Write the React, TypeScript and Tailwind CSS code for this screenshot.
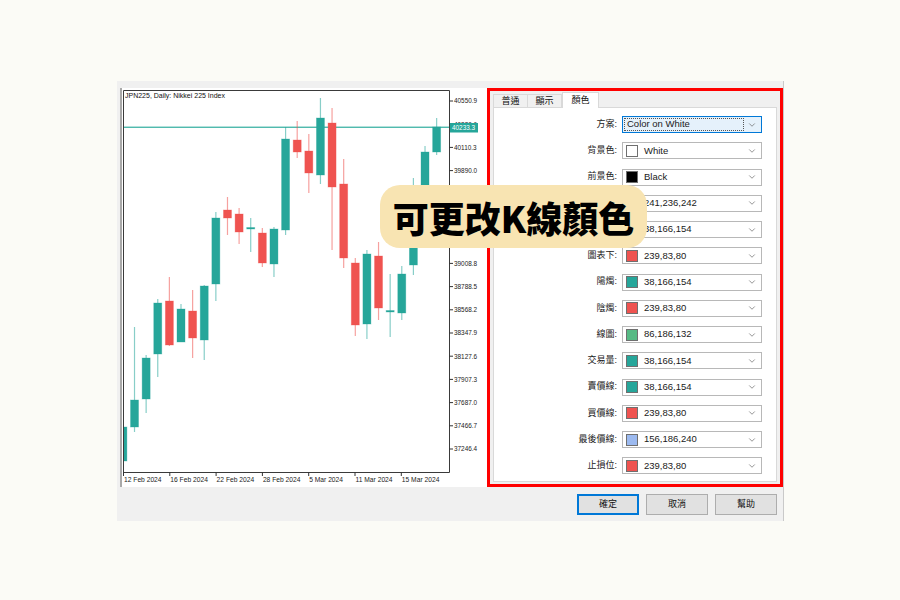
import React from "react";
import { ChevronDown } from "lucide-react";

type Candle = {
  up: boolean;
  wt: number;
  bt: number;
  bb: number;
  wb: number;
};

type ColorRow = {
  label: string;
  value: string;
  swatch?: string;
};

const GREEN = "#26a69a";
const RED = "#ef5350";

// candle pixel positions, read straight off the chart
const candles: Array<Candle> = [
  { up: true, wt: 424, bt: 427, bb: 461, wb: 462 },
  { up: true, wt: 327, bt: 400, bb: 427, wb: 432 },
  { up: true, wt: 355, bt: 358, bb: 399, wb: 413 },
  { up: true, wt: 299, bt: 303, bb: 354, wb: 377 },
  { up: false, wt: 277, bt: 301, bb: 345, wb: 346 },
  { up: true, wt: 304, bt: 309, bb: 342, wb: 342 },
  { up: false, wt: 290, bt: 311, bb: 338, wb: 358 },
  { up: true, wt: 285, bt: 286, bb: 340, wb: 360 },
  { up: true, wt: 212, bt: 218, bb: 284, wb: 301 },
  { up: false, wt: 197, bt: 210, bb: 218, wb: 235 },
  { up: false, wt: 208, bt: 214, bb: 232, wb: 244 },
  { up: true, wt: 218, bt: 227.5, bb: 229, wb: 252 },
  { up: false, wt: 228, bt: 233, bb: 263, wb: 267 },
  { up: true, wt: 227, bt: 229, bb: 264, wb: 277 },
  { up: true, wt: 127, bt: 139, bb: 230, wb: 235 },
  { up: false, wt: 121, bt: 140, bb: 152, wb: 158 },
  { up: false, wt: 134, bt: 151, bb: 173, wb: 193 },
  { up: true, wt: 98, bt: 118, bb: 175, wb: 184 },
  { up: false, wt: 108, bt: 123, bb: 187, wb: 250 },
  { up: false, wt: 159, bt: 184, bb: 258, wb: 268 },
  { up: false, wt: 258, bt: 263, bb: 325, wb: 336 },
  { up: true, wt: 250, bt: 254, bb: 324, wb: 339 },
  { up: false, wt: 242, bt: 256, bb: 308, wb: 320 },
  { up: true, wt: 274, bt: 310.5, bb: 312, wb: 337 },
  { up: true, wt: 266, bt: 274, bb: 313, wb: 320 },
  { up: true, wt: 178, bt: 200, bb: 265, wb: 275 },
  { up: true, wt: 146, bt: 152, bb: 215, wb: 225 },
  { up: true, wt: 118, bt: 127, bb: 152, wb: 155 },
];

const prices = [
  "40550.9", "40330.6", "40110.3", "39890.0", "39669.7", "39449.4", "39229.1", "39008.8",
  "38788.5", "38568.2", "38347.9", "38127.6", "37907.3", "37687.0", "37466.7", "37246.4",
];

const dates = ["12 Feb 2024", "16 Feb 2024", "22 Feb 2024", "28 Feb 2024", "5 Mar 2024", "11 Mar 2024", "15 Mar 2024"];

const rows: Array<ColorRow> = [
  { label: "背景色:", value: "White", swatch: "#ffffff" },
  { label: "前景色:", value: "Black", swatch: "#000000" },
  { label: "網格:", value: "241,236,242", swatch: "rgb(241,236,242)" },
  { label: "圖表上:", value: "38,166,154", swatch: GREEN },
  { label: "圖表下:", value: "239,83,80", swatch: RED },
  { label: "陽燭:", value: "38,166,154", swatch: GREEN },
  { label: "陰燭:", value: "239,83,80", swatch: RED },
  { label: "線圖:", value: "86,186,132", swatch: "rgb(86,186,132)" },
  { label: "交易量:", value: "38,166,154", swatch: GREEN },
  { label: "賣價線:", value: "38,166,154", swatch: GREEN },
  { label: "買價線:", value: "239,83,80", swatch: RED },
  { label: "最後價線:", value: "156,186,240", swatch: "rgb(156,186,240)" },
  { label: "止損位:", value: "239,83,80", swatch: RED },
];

const font = { fontFamily: "'Liberation Sans', 'Noto Sans CJK TC', sans-serif" };

function Chart() {
  return (
    <svg width={365} height={399} viewBox="121 88 365 399" style={font}>
      <defs>
        <clipPath id="plot">
          <rect x={123} y={91} width={325} height={381} />
        </clipPath>
      </defs>
      <rect x={121} y={88} width={365} height={399} fill="#ffffff" />
      <text x={124} y={98} fontSize={7} fill="#111">
        JPN225, Daily:  Nikkei 225 Index
      </text>

      {/* current price line */}
      <rect x={123} y={126.6} width={325} height={1.3} fill="#3fb3a6" />

      <g clipPath="url(#plot)">
        {candles.map((c, i) => {
          const cx = 121.9 + i * 11.62;
          const col = c.up ? GREEN : RED;
          return (
            <g key={i}>
              <line x1={cx} x2={cx} y1={c.wt} y2={c.wb} stroke={col} strokeOpacity={0.55} strokeWidth={1.2} />
              <rect x={cx - 4} y={c.bt} width={8} height={Math.max(c.bb - c.bt, 1.5)} fill={col} stroke={col} strokeOpacity={0.4} strokeWidth={0.8} />
            </g>
          );
        })}
      </g>

      <path d="M122.5 90.5 H448.5 V472.5 H122.5 Z" fill="none" stroke="#3a3a3a" strokeWidth={1} />

      {prices.map((p, i) => {
        const y = 101 + i * 23.2;
        return (
          <g key={p}>
            <line x1={448} x2={452} y1={y} y2={y} stroke="#333" />
            <text x={453} y={y + 2.3} fontSize={6.4} fill="#222">
              {p}
            </text>
          </g>
        );
      })}
      <rect x={449} y={123} width={28} height={9.5} fill={GREEN} />
      <text x={451} y={130.2} fontSize={6.4} fill="#ffffff">
        40233.3
      </text>

      {dates.map((d, i) => {
        const x = 122.5 + i * 46.3;
        return (
          <g key={d}>
            <line x1={x} x2={x} y1={472} y2={476} stroke="#333" />
            <text x={x + 0.5} y={481.5} fontSize={6.7} fill="#222">
              {d}
            </text>
          </g>
        );
      })}
    </svg>
  );
}

function Swatch({ color }: { color: string }) {
  return <span className="w-[12px] h-[12px] border border-[#6f6f6f] shrink-0" style={{ backgroundColor: color }} />;
}

export default function App() {
  return (
    <div className="relative w-[900px] h-[600px] bg-[#fbfbf6] pl-[117px] pt-[81px] overflow-hidden" style={font}>
      <div className="w-[667px] h-[440px] bg-[#f0f0f0] border-r border-[#c9c9c9] flex flex-col">
        <div className="flex pt-[7px]">
          <div className="ml-[3px] w-[366px] h-[399px] border-l-2 border-[#a9a9a9] bg-white">
            <Chart />
          </div>

          <div className="ml-[1px] w-[296px] h-[399px] border-[3px] border-[#ff0000] flex flex-col px-[3px] pb-[2px]">
            <div className="flex items-end h-[16px] text-[9px] text-[#111] leading-none">
              <div className="w-[35px] h-[13px] border border-b-0 border-[#d9d9d9] bg-[#f0f0f0] flex items-center justify-center">普通</div>
              <div className="w-[34px] h-[13px] border border-b-0 border-l-0 border-[#d9d9d9] bg-[#f0f0f0] flex items-center justify-center">顯示</div>
              <div className="w-[37px] h-[16px] border border-b-0 border-[#d9d9d9] bg-white flex items-center justify-center -mb-[1px] relative z-10">顏色</div>
            </div>
            <div className="flex-1 border border-[#d9d9d9] bg-white pt-[8px] flex flex-col gap-[9.25px] text-[9.5px] text-[#1a1a1a]">
              <div className="flex items-center h-[17px]">
                <span className="w-[123px] text-right text-[9px]">方案:</span>
                <div className="ml-[5px] w-[140px] h-[17px] border border-[#0078d7] bg-[#e5f1fb] flex items-center p-[1px]">
                  <div className="flex-1 h-full border border-dotted border-[#555] flex items-center pl-[2px]">Color on White</div>
                  <ChevronDown size={10} strokeWidth={1.5} className="mx-[3px] text-[#555]" />
                </div>
              </div>
              {rows.map((r) => (
                <div key={r.label} className="flex items-center h-[17px]">
                  <span className="w-[123px] text-right text-[9px]">{r.label}</span>
                  <div className="ml-[5px] w-[140px] h-[17px] border border-[#b8b8b8] bg-white flex items-center pl-[3px]">
                    <Swatch color={r.swatch ?? "#fff"} />
                    <span className="ml-[6px] flex-1">{r.value}</span>
                    <ChevronDown size={10} strokeWidth={1.5} className="mr-[4px] text-[#555]" />
                  </div>
                </div>
              ))}
            </div>
          </div>
        </div>

        <div className="flex justify-end gap-[7px] pr-[6px] pt-[7px] text-[9px] text-[#111]">
          <button className="w-[62px] h-[21px] border-2 border-[#0078d7] bg-[#e1e1e1]">確定</button>
          <button className="w-[62px] h-[21px] border border-[#adadad] bg-[#e1e1e1]">取消</button>
          <button className="w-[62px] h-[21px] border border-[#adadad] bg-[#e1e1e1]">幫助</button>
        </div>
      </div>

      <div className="absolute left-[380px] top-[185px] w-[267px] h-[63px] rounded-[20px] bg-[#f8e4b2] flex items-center justify-center">
        <span className="text-[36px] font-black text-black leading-none" style={{ fontFamily: "'Noto Sans CJK TC', 'Noto Sans', sans-serif" }}>
          可更改K線顏色
        </span>
      </div>
    </div>
  );
}
